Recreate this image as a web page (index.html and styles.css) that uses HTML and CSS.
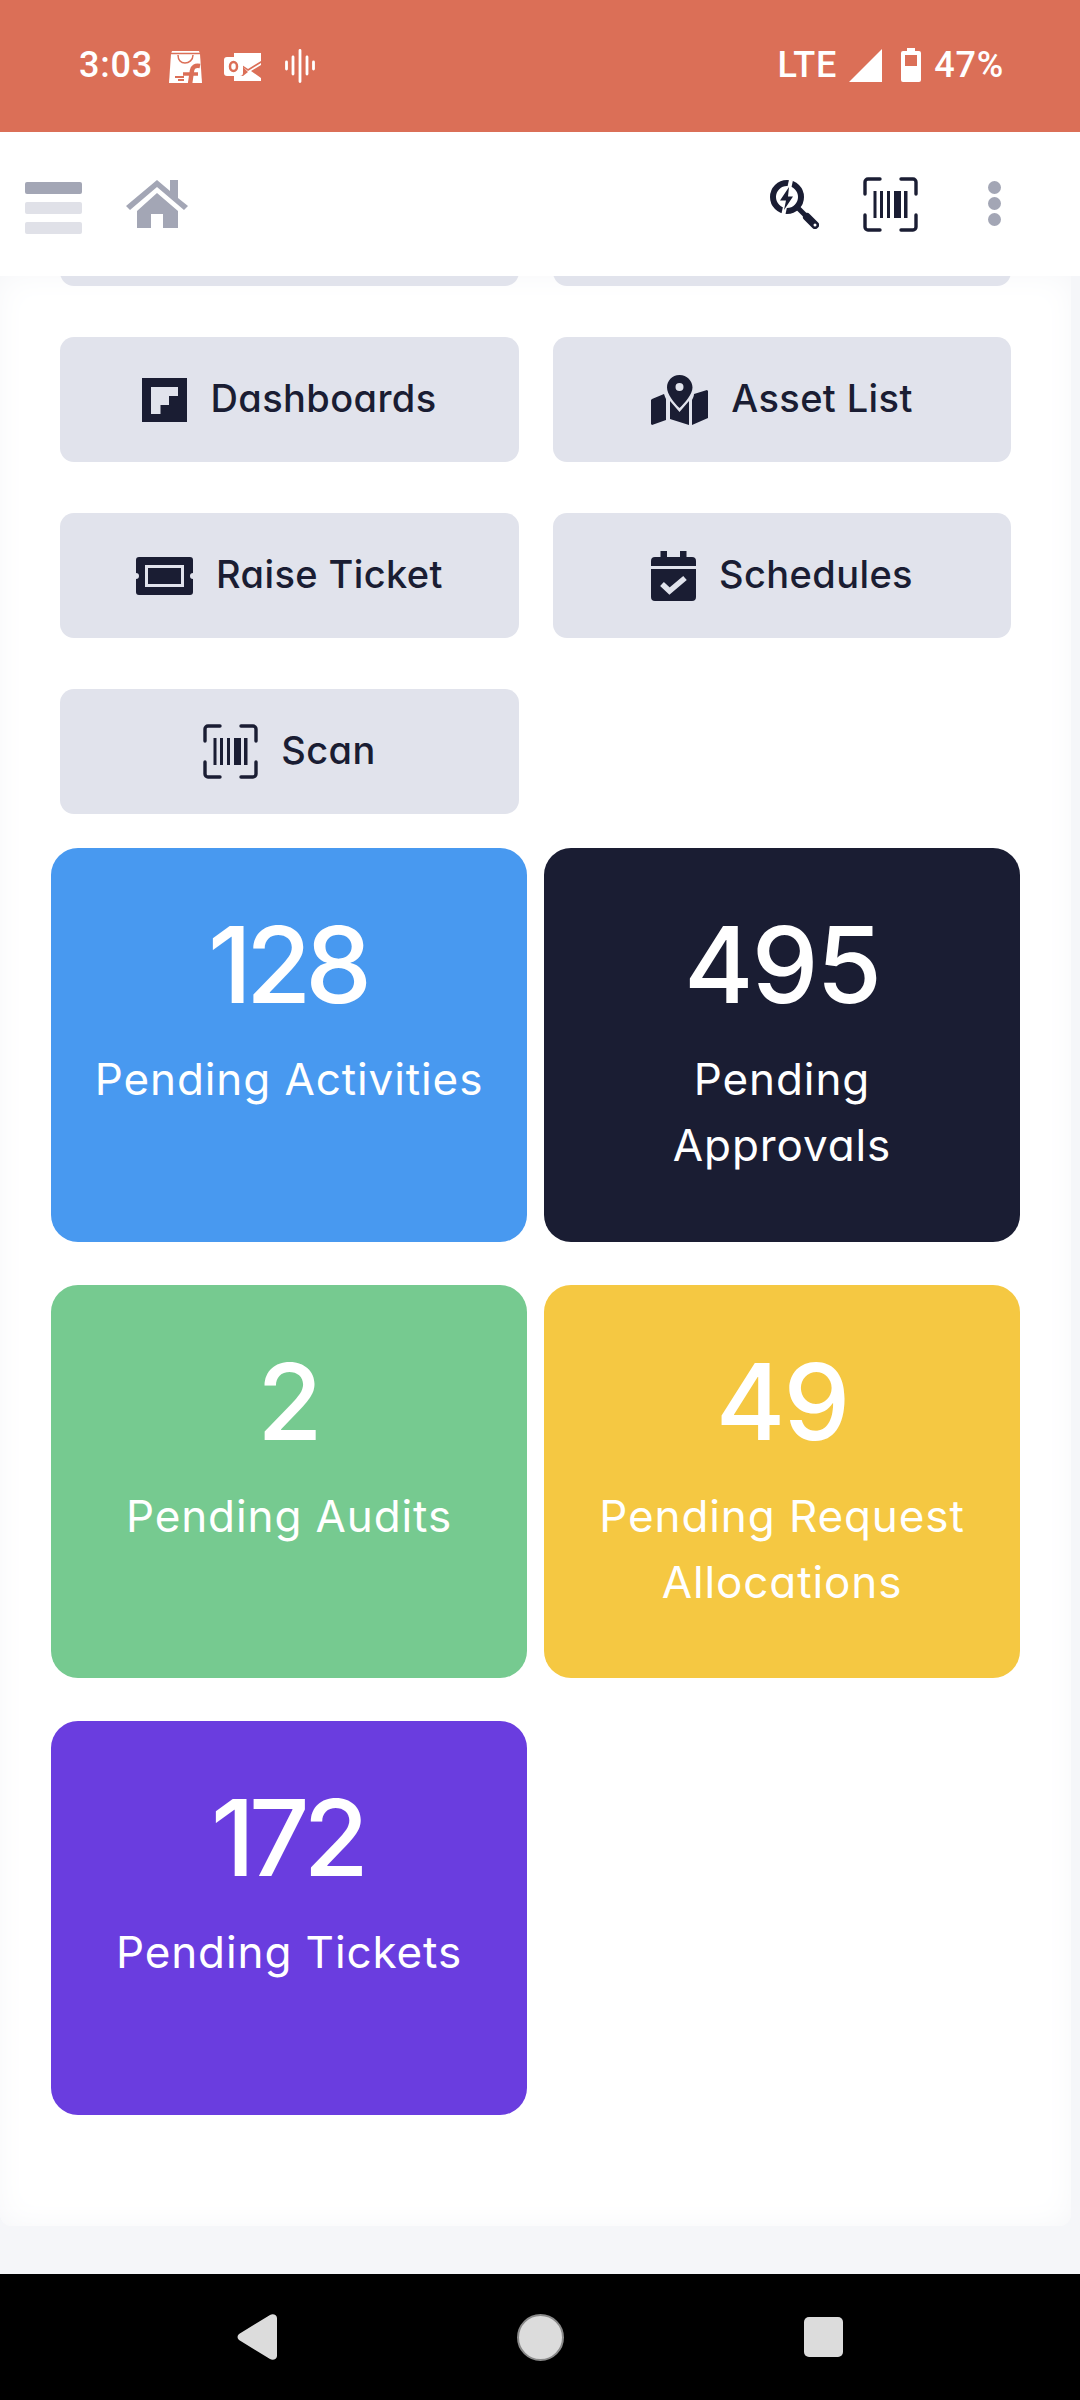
FILE: index.html
```html
<!DOCTYPE html>
<html lang="en">
<head>
<meta charset="utf-8">
<title>Dashboard</title>
<link rel="stylesheet" href="styles.css">
</head>
<body>
<div class="phone">
  <div class="statusbar">
    <div class="status-left">
      <span class="clock">3:03</span>
      <svg class="st-shop" viewBox="0 0 33 34"><path fill="#fff" d="M2 4 3 1h27l1 3 2 29H0z"/><path fill="none" stroke="#DB6F57" stroke-width="1.500" d="M9 5c0 5 3 8 7 8s8-3 8-8M2 3.500h29"/><path fill="none" stroke="#DB6F57" stroke-width="4.500" d="M31 16c-5-1-7.500 1-8 4.500L21 34"/><path fill="none" stroke="#DB6F57" stroke-width="3.500" d="M14 24h15"/><path fill="none" stroke="#DB6F57" stroke-width="1.800" d="M6 27h9M9 30h6"/></svg>
      <svg class="st-mail" viewBox="0 0 37 29"><path fill="#fff" d="M10 1h27v8L24 17l-6-4v-3h-8zM19 15l5 4 13-8v2l-10 6 10 7v3H10v-5h9l5-4z"/><rect x="0" y="5" width="19" height="19" rx="3" fill="#fff"/><ellipse cx="9.500" cy="14.500" rx="3.500" ry="4.500" fill="none" stroke="#DB6F57" stroke-width="2.500"/></svg>
      <svg class="st-wave" viewBox="0 0 30 34"><path stroke="#fff" stroke-width="2.800" stroke-linecap="round" d="M1.500 13v7M8 8v17M15 1.500v31M22 8v17M28.500 13v7"/></svg>
    </div>
    <div class="status-right">
      <span class="lte">LTE</span>
      <svg class="st-signal" viewBox="0 0 33 33"><path fill="#fff" d="M33 0v33H0z"/></svg>
      <svg class="st-batt" viewBox="0 0 20 34"><path fill="#fff" d="M6 0h8v3h4a2 2 0 0 1 2 2v27a2 2 0 0 1-2 2H2a2 2 0 0 1-2-2V5a2 2 0 0 1 2-2h4z"/><rect x="4" y="7" width="12" height="11" fill="#DB6F57"/></svg>
      <span class="pct">47%</span>
    </div>
  </div>

  <header class="topbar">
    <div class="top-left">
      <div class="burger"><i class="bar-a"></i><i class="bar-b"></i><i class="bar-b"></i></div>
      <svg class="home" viewBox="0 0 62 48"><path fill="#A3A6B5" d="M31 0 44 11V0h8v18l10 8-4 4L31 7 4 30l-4-4zM31 13l21 18v17H37V34H25v14H11V31z"/></svg>
    </div>
    <div class="top-right">
      <svg class="wrench" viewBox="0 0 49 49"><circle cx="17" cy="17" r="14" fill="none" stroke="#1A1D33" stroke-width="6"/><path stroke="#fff" stroke-width="4" d="M21 0 13 36"/><path fill="#1A1D33" d="M19 7 10 20.500h6L14 30l9-13.500h-5z"/><path stroke="#1A1D33" stroke-width="5" d="M26 26 38 38"/><path stroke="#1A1D33" stroke-width="8" stroke-linecap="round" d="M37 37 45 45"/><circle cx="45" cy="45" r="1.500" fill="#fff"/></svg>
      <svg class="barcode" viewBox="0 0 55 55"><use href="#barcode-art"/></svg>
      <div class="dots"><i></i><i></i><i></i></div>
    </div>
  </header>

  <main class="panel">
    <div class="btn-grid">
      <div class="btn btn-cut"></div>
      <div class="btn btn-cut"></div>
      <div class="btn">
        <svg class="ic ic-dash" viewBox="0 0 45 44"><path fill="#1A1D33" fill-rule="evenodd" d="M0 0h45v44H0zM9 9v27h9.500v-9H27v-9h9V9z"/></svg>
        <span>Dashboards</span>
      </div>
      <div class="btn">
        <svg class="ic ic-map" viewBox="0 0 57 50"><path fill="#1A1D33" fill-rule="evenodd" d="M28.500 0C36 0 41.500 6 41.500 12.500 41.500 19 34 28 28.500 33 23 28 16 19 16 12.500 16 6 21 0 28.500 0zm0 8a4 4 0 1 0 0 8 4 4 0 0 0 0-8z"/><path fill="#1A1D33" d="M1 24l12-5c.5 1 1 3 2 5v21L1 50l-1-1V25zM19 26l9.500 11L38 26v24l-19-6zM41 25c1-2 2-4 2-6l13-4 1 1v27l-16 7z"/></svg>
        <span>Asset List</span>
      </div>
      <div class="btn">
        <svg class="ic ic-ticket" viewBox="0 0 57 38"><path fill="#1A1D33" fill-rule="evenodd" d="M3 0h51a3 3 0 0 1 3 3v13a3 3 0 0 0 0 6v13a3 3 0 0 1-3 3H3a3 3 0 0 1-3-3V22a3 3 0 0 0 0-6V3a3 3 0 0 1 3-3zM9 8v22h39V8z"/><rect x="12" y="11" width="33" height="16" fill="#1A1D33"/></svg>
        <span>Raise Ticket</span>
      </div>
      <div class="btn">
        <svg class="ic ic-cal" viewBox="0 0 45 50"><path fill="#1A1D33" d="M9.500 0H16v6h13V0h6.500v6H41a4 4 0 0 1 4 4v5H0v-5a4 4 0 0 1 4-4h5.500zM0 18h45v28a4 4 0 0 1-4 4H4a4 4 0 0 1-4-4z"/><path fill="none" stroke="#E1E3EC" stroke-width="5.500" d="M11 33l7.500 7L34 27"/></svg>
        <span>Schedules</span>
      </div>
      <div class="btn">
        <svg class="ic ic-scan" viewBox="0 0 55 55"><use href="#barcode-art"/></svg>
        <span>Scan</span>
      </div>
    </div>

    <div class="card-grid">
      <div class="card c-blue"><div class="num num-tight">128</div><div class="lbl">Pending Activities</div></div>
      <div class="card c-navy"><div class="num">495</div><div class="lbl">Pending<br>Approvals</div></div>
      <div class="card c-green"><div class="num">2</div><div class="lbl">Pending Audits</div></div>
      <div class="card c-yellow"><div class="num">49</div><div class="lbl">Pending Request<br>Allocations</div></div>
      <div class="card c-purple"><div class="num num-tight">172</div><div class="lbl">Pending Tickets</div></div>
    </div>
  </main>

  <div class="gap-strip"></div>

  <nav class="navbar">
    <svg class="nav-back" viewBox="0 0 40 46"><path fill="#DCDCDC" d="M33 1c3-2 7 0 7 3v38c0 3-4 5-7 3L2 26c-2-2-2-4 0-6z"/></svg>
    <div class="nav-home"></div>
    <div class="nav-recent"></div>
  </nav>
</div>
<svg class="defs" aria-hidden="true"><defs><g id="barcode-art"><path fill="none" stroke="#1A1D33" stroke-width="3.400" stroke-linecap="round" d="M17 2H5a3 3 0 0 0-3 3v12M38 2h12a3 3 0 0 1 3 3v12M17 53H5a3 3 0 0 1-3-3V38M38 53h12a3 3 0 0 0 3-3V38"/><path fill="#1A1D33" d="M10.500 14H13.500v27h-3zM17 14h3v27h-3zM24 14h3v27h-3zM31 14h7v27h-7zM41 14h3.500v27H41z"/></g></defs></svg>
</body>
</html>
```

FILE: styles.css
```css
* { box-sizing: border-box; }
html, body { margin: 0; padding: 0; }
body { font-family: "Inter", "Noto Sans", sans-serif; font-feature-settings: "cv11"; background: #F5F6F9; }
.phone { width: 1080px; height: 2400px; display: flex; flex-direction: column; overflow: hidden; background: #F5F6F9; }
.defs { position: absolute; width: 0; height: 0; }

.statusbar { height: 132px; flex: none; background: #DB6F57; color: #fff; display: flex; justify-content: space-between; align-items: center; padding: 0 76px 2px 79px; font-family: "Roboto", sans-serif; font-size: 36px; font-weight: 500; letter-spacing: .8px; font-feature-settings: normal; }
.status-left, .status-right { display: flex; align-items: center; }
.clock { width: 90px; }
.st-shop { width: 33px; height: 34px; margin-top: 4px; }
.st-mail { width: 37px; height: 29px; margin-left: 22px; margin-top: 2px; }
.st-wave { width: 30px; height: 34px; margin-left: 24px; margin-top: 2px; }
.lte { margin-right: 12px; }
.st-signal { width: 33px; height: 33px; margin-right: 19px; }
.st-batt { width: 20px; height: 34px; margin-right: 13px; }

.topbar { height: 144px; flex: none; background: #fff; display: flex; justify-content: space-between; align-items: center; padding: 0 79px 0 25px; position: relative; z-index: 2; }
.top-left { display: flex; align-items: center; gap: 44px; }
.burger { width: 57px; display: flex; flex-direction: column; gap: 8px; margin-top: 8px; }
.burger i { display: block; height: 12px; border-radius: 2px; }
.bar-a { background: #A3A6B5; }
.bar-b { background: #E0E1E8; }
.home { width: 62px; height: 48px; }
.top-right { display: flex; align-items: center; }
.wrench { width: 49px; height: 49px; }
.barcode { width: 55px; height: 55px; margin-left: 44px; }
.dots { display: flex; flex-direction: column; gap: 3px; margin-left: 70px; margin-top: -1px; }
.dots i { display: block; width: 13px; height: 13px; border-radius: 50%; background: #A3A6B5; }

.panel { height: 1950px; flex: none; background: #fff; margin: 0 9px 0 0; border-radius: 0 0 12px 12px; box-shadow: inset 0 0 36px -6px #F3F4F7; display: flex; flex-direction: column; }
.btn-grid { display: grid; grid-template-columns: 459px 458px; column-gap: 34px; row-gap: 51px; padding-left: 60px; margin-top: -115px; }
.btn { height: 125px; border-radius: 14px; background: #E1E3EC; color: #1A1D33; display: flex; align-items: center; justify-content: center; gap: 23px; font-size: 38px; font-weight: 500; letter-spacing: .4px; }
.btn span { padding-bottom: 3px; }
.ic-dash { width: 45px; height: 44px; }
.ic-map { width: 57px; height: 50px; }
.ic-ticket { width: 57px; height: 38px; }
.ic-cal { width: 45px; height: 50px; }
.ic-scan { width: 55px; height: 55px; }

.card-grid { display: grid; grid-template-columns: 476px 476px; column-gap: 17px; row-gap: 43px; padding-left: 51px; margin-top: 34px; }
.card { height: 393.500px; border-radius: 27px; color: #fff; text-align: center; padding-top: 62px; }
.num { font-size: 106px; font-weight: 500; line-height: 110px; letter-spacing: -2px; }
.num-tight { letter-spacing: -6px; padding-right: 4px; }
.lbl { font-size: 44px; line-height: 66px; margin-top: 26px; letter-spacing: .9px; }
.c-blue { background: #4899F0; }
.c-navy { background: #1A1D33; }
.c-green { background: #76CA90; }
.c-yellow { background: #F5C842; }
.c-purple { background: #6A3DDF; }

.gap-strip { height: 48px; flex: none; }
.navbar { height: 126px; flex: none; background: #000; display: flex; align-items: center; }
.nav-back { width: 40px; height: 46px; margin-left: 237px; }
.nav-home { width: 47px; height: 47px; border-radius: 50%; background: #DCDCDC; border: 2px solid #8a8a8a; margin-left: 240px; }
.nav-recent { width: 39px; height: 40px; border-radius: 5px; background: #DCDCDC; margin-left: 240px; }
```
